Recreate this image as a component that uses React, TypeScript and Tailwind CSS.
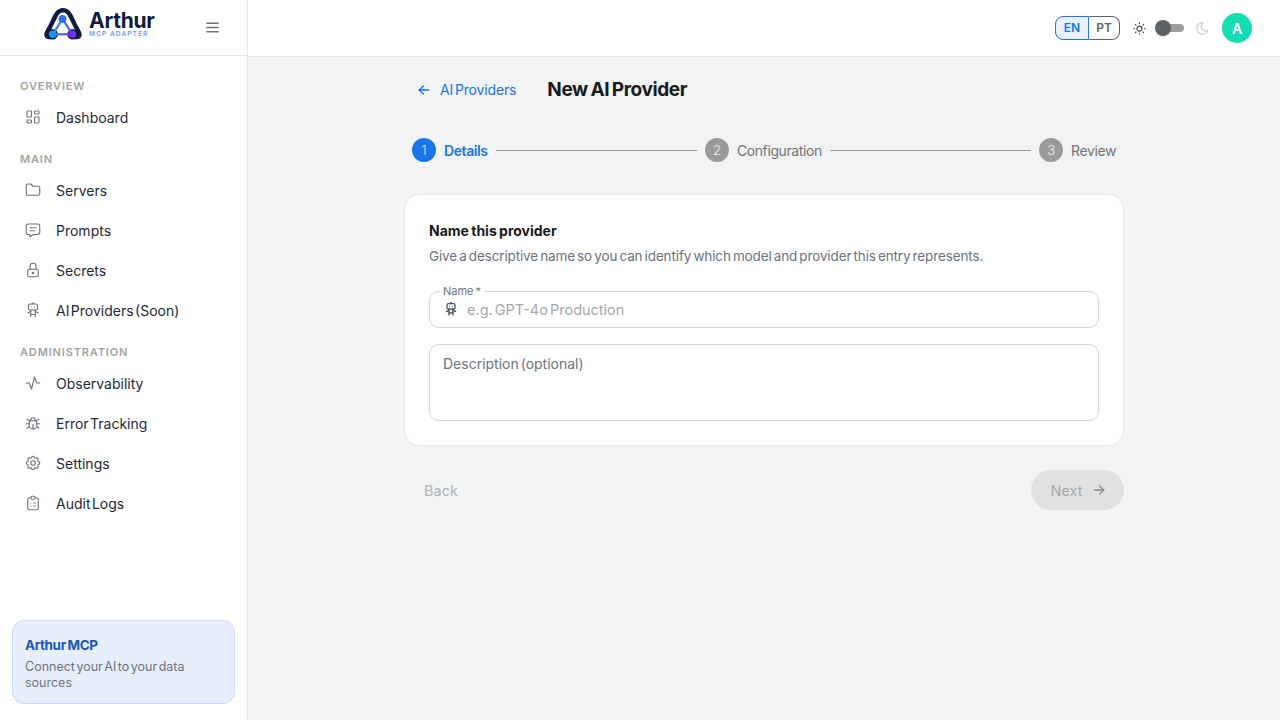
import type { ReactNode } from "react";
import {
  TbActivity,
  TbArrowLeft,
  TbArrowRight,
  TbBug,
  TbClipboardList,
  TbFolder,
  TbLayoutDashboard,
  TbLock,
  TbMenu2,
  TbMessage,
  TbMoon,
  TbRobot,
  TbSettings,
  TbSun,
} from "react-icons/tb";

function Logo() {
  return (
    <div className="mb-[8px] flex items-start gap-[7px]">
      <svg width="38" height="32" viewBox="0 0 38 32" fill="none">
        <defs>
          <linearGradient id="edge" x1="8" y1="0" x2="29" y2="0" gradientUnits="userSpaceOnUse">
            <stop offset="0" stopColor="#1a94f5" />
            <stop offset="1" stopColor="#7c2cf0" />
          </linearGradient>
        </defs>
        <path
          d="M0.3 26.5 C0.3 23.5 3.5 20 6.5 13 C10 5 13 0 19 0 C25 0 28 5 31.5 13 C34.5 20 37.7 23.5 37.7 26.5 C37.7 31 33 32 30 31 L8 31 C5 32 0.3 31 0.3 26.5 Z"
          fill="#10193f"
        />
        <path d="M19 4.5 C16 4.5 14.5 6.5 13 10 L6.5 23 L10 32 L28 32 L31.5 23 L25 10 C23.5 6.5 22 4.5 19 4.5 Z" fill="#ffffff" />
        <circle cx="8.7" cy="26.3" r="5.2" fill="#10193f" />
        <circle cx="28.5" cy="26.3" r="5.2" fill="#10193f" />
        <path d="M8.7 26.3 L18.5 11" stroke="#2f86f5" strokeWidth="2.2" />
        <path d="M18.5 11 L28.5 26.3" stroke="#4a63f2" strokeWidth="2.2" />
        <path d="M8.7 26.3 L28.5 26.3" stroke="url(#edge)" strokeWidth="2.2" />
        <circle cx="18.5" cy="11" r="3.9" fill="#2b6ff0" />
        <circle cx="8.7" cy="26.3" r="3.8" fill="#1a94f5" />
        <circle cx="28.5" cy="26.3" r="3.8" fill="#7c2cf0" />
      </svg>
      <div className="mt-[5px] flex flex-col items-start">
        <span className="text-[21px] leading-[16px] font-bold text-[#10193f] font-['Inter',sans-serif] tracking-[-0.25px]">
          Arthur
        </span>
        <span className="mt-[2px] text-[6.5px] leading-[7px] font-semibold tracking-[1.1px] text-[#6c9cf5] font-['Inter',sans-serif]">
          MCP ADAPTER
        </span>
      </div>
    </div>
  );
}

function SectionLabel({ children }: { children: ReactNode }) {
  return (
    <div className="h-[23px] pl-[20px] pt-[5px] text-[11px] leading-[14px] font-semibold tracking-[0.85px] text-[#a3a3a3]">
      {children}
    </div>
  );
}

function NavItem({ icon, label }: { icon: ReactNode; label: string }) {
  return (
    <div className="flex h-10 items-center pl-[24px] text-[14px] text-[#1f2937] [word-spacing:-2.5px]">
      <span className="flex w-[32px] text-[#6b7280]">{icon}</span>
      {label}
    </div>
  );
}

function Step({ n, label, active }: { n: number; label: string; active?: boolean }) {
  return (
    <div className="flex items-center gap-2">
      <span
        className={`flex h-6 w-6 items-center justify-center rounded-full pt-px text-[13px] font-light text-white/85 ${
          active ? "bg-[#1a73e8]" : "bg-[#9a9a9a]"
        }`}
      >
        {n}
      </span>
      <span className={`text-[14px] tracking-[-0.4px] ${active ? "font-semibold text-[#1a73e8]" : "text-[#737373]"}`}>
        {label}
      </span>
    </div>
  );
}

export default function App() {
  return (
    <div className="flex h-screen w-full overflow-hidden bg-[#f1f3f5] font-['Inter',sans-serif]">
      <aside className="flex w-[248px] shrink-0 flex-col border-r border-[#e5e7eb] bg-white">
        <div className="flex h-[56px] shrink-0 items-center border-b border-[#e5e7eb] pl-[44px]">
          <Logo />
          <TbMenu2 size={17} className="ml-[49px] text-[#6b7280]" />
        </div>
        <nav className="flex flex-1 flex-col pt-[18px]">
          <SectionLabel>OVERVIEW</SectionLabel>
          <NavItem icon={<TbLayoutDashboard size={18} strokeWidth={1.5} />} label="Dashboard" />
          <div className="h-[10px]" />
          <SectionLabel>MAIN</SectionLabel>
          <NavItem icon={<TbFolder size={18} strokeWidth={1.5} />} label="Servers" />
          <NavItem icon={<TbMessage size={18} strokeWidth={1.5} />} label="Prompts" />
          <NavItem icon={<TbLock size={18} strokeWidth={1.5} />} label="Secrets" />
          <NavItem icon={<TbRobot size={18} strokeWidth={1.5} />} label="AI Providers (Soon)" />
          <div className="h-[10px]" />
          <SectionLabel>ADMINISTRATION</SectionLabel>
          <NavItem icon={<TbActivity size={18} strokeWidth={1.5} />} label="Observability" />
          <NavItem icon={<TbBug size={18} strokeWidth={1.5} />} label="Error Tracking" />
          <NavItem icon={<TbSettings size={18} strokeWidth={1.5} />} label="Settings" />
          <NavItem icon={<TbClipboardList size={18} strokeWidth={1.5} />} label="Audit Logs" />
        </nav>
        <div className="mx-[12px] mb-[16px] h-[84px] rounded-[12px] border border-[#c9dcfb] bg-[#e8effc] px-[12px] pt-[15px]">
          <p className="text-[13.5px] leading-[18px] font-bold tracking-[-0.4px] text-[#1a56b8] [word-spacing:-1px]">Arthur MCP</p>
          <p className="mt-[5px] text-[12.5px] leading-[16px] text-[#6b7280] [word-spacing:-2px]">
            Connect your AI to your data sources
          </p>
        </div>
      </aside>

      <div className="flex min-w-0 flex-1 flex-col">
        <header className="flex h-[57px] shrink-0 items-center justify-end border-b border-[#e5e7eb] bg-white pr-[28px]">
          <div className="flex h-[24px] text-[12px] font-semibold">
            <span className="flex w-[34px] items-center justify-center rounded-l-[8px] border border-[#1a73e8] bg-[#e8f0fe] text-[#1a73e8]">
              EN
            </span>
            <span className="flex w-[31px] items-center justify-center rounded-r-[8px] border border-l-0 border-[#5f6368] text-[#5f6368]">
              PT
            </span>
          </div>
          <TbSun size={15} className="ml-[12px] text-[#4b5563]" />
          <div className="relative ml-[9px] h-[8px] w-[28px] rounded-full bg-[#9e9e9e]">
            <span className="absolute left-[-1px] top-[-4px] h-4 w-4 rounded-full bg-[#5f6368] shadow" />
          </div>
          <TbMoon size={15} className="ml-[11px] text-[#c9ccd1]" />
          <span className="ml-[12px] flex h-[30px] w-[30px] items-center justify-center rounded-full bg-[#14dcb4] text-[14px] font-semibold text-white">
            A
          </span>
        </header>

        <main className="flex flex-1 justify-center">
          <div className="w-[720px] pt-[19px]">
            <div className="flex items-center pl-[12px]">
              <TbArrowLeft size={16} className="text-[#1a73e8]" />
              <span className="mb-[2px] ml-[8px] text-[14px] tracking-[-0.15px] text-[#1a73e8] [word-spacing:-2px]">AI Providers</span>
              <h1 className="ml-[31px] text-[19px] leading-[28px] font-bold tracking-[-0.4px] text-[#1a1a1a] [word-spacing:-1.5px]">
                New AI Provider
              </h1>
            </div>

            <div className="mt-[34px] flex items-center pl-[8px] pr-[8px]">
              <Step n={1} label="Details" active />
              <div className="mx-[8px] h-px flex-1 bg-[#9a9a9a]" />
              <Step n={2} label="Configuration" />
              <div className="mx-[8px] h-px flex-1 bg-[#9a9a9a]" />
              <Step n={3} label="Review" />
            </div>

            <section className="mt-[32px] h-[252px] rounded-[16px] border border-[#e5e7eb] bg-white px-[24px] pt-[25px]">
              <h2 className="text-[14px] leading-[22px] font-bold text-[#1a1a1a] [word-spacing:-1px]">Name this provider</h2>
              <p className="mt-[3px] text-[13.5px] leading-[22px] tracking-[-0.13px] text-[#6b7280] [word-spacing:-1.5px]">
                Give a descriptive name so you can identify which model and provider this entry represents.
              </p>
              <div className="relative mt-[24px] flex h-[37px] items-center rounded-[10px] border border-[#d4d4d8] pl-[13px]">
                <span className="absolute left-[10px] top-[-8px] bg-white px-[3px] text-[11px] leading-[14px] text-[#6b7280] [word-spacing:-1px]">
                  Name *
                </span>
                <TbRobot size={16} className="mb-[2px] text-[#4b5563]" />
                <span className="ml-[8px] text-[14.5px] text-[#a8a8a8] [word-spacing:-2px]">e.g. GPT-4o Production</span>
              </div>
              <div className="mt-[16px] h-[77px] rounded-[10px] border border-[#d4d4d8] px-[13px] pt-[8px] text-[14px] leading-[22px] text-[#6b7280] [word-spacing:-2px]">
                Description (optional)
              </div>
            </section>

            <div className="mt-[24px] flex items-center justify-between">
              <span className="pl-[20px] pt-px text-[14.5px] text-[#b4b4b4]">Back</span>
              <span className="flex h-[40px] w-[93px] items-center justify-center gap-[8px] rounded-full bg-[#e0e1e2] pl-[2px] text-[14.5px] text-[#a8a8a8]">
                <span className="pt-px">Next</span>
                <TbArrowRight size={16} className="text-[#8c8c8c]" />
              </span>
            </div>
          </div>
        </main>
      </div>
    </div>
  );
}
